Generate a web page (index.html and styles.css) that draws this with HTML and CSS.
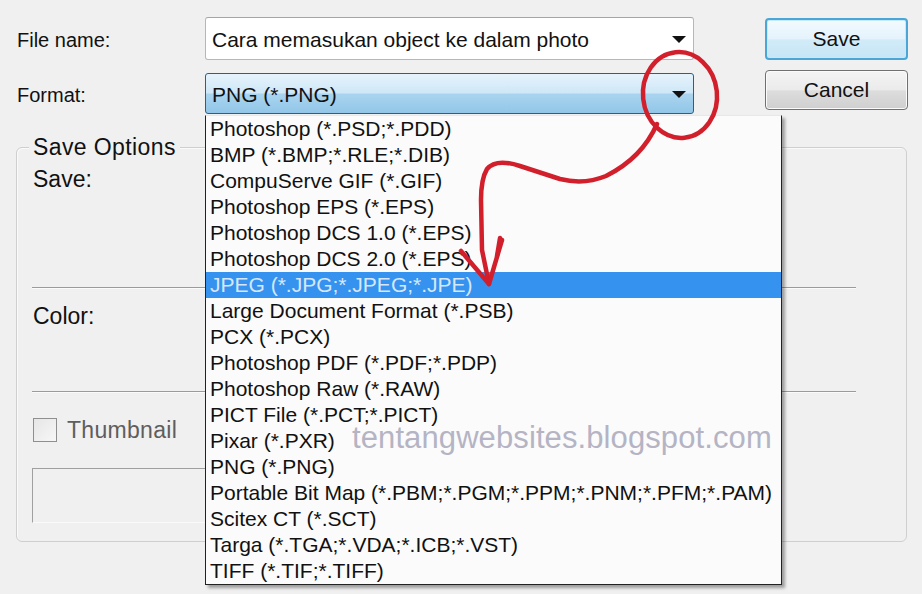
FILE: index.html
```html
<!DOCTYPE html>
<html lang="en">
<head>
    <meta charset="UTF-8">
    <meta name="viewport" content="width=device-width, initial-scale=1.0">
    <title>Save As</title>
    <link rel="stylesheet" href="styles.css">
</head>
<body>
    <div class="dialog">
        <div class="top">
            <div class="fields">
                <div class="field-row">
                    <div class="field-label">File name:</div>
                    <div class="input">
                        <span>Cara memasukan object ke dalam photo</span>
                        <svg class="arrow" width="14" height="8" viewBox="0 0 14 8"><polygon points="0,0 14,0 7,7" /></svg>
                    </div>
                </div>
                <div class="field-row">
                    <div class="field-label">Format:</div>
                    <div class="input combo">
                        <span>PNG (*.PNG)</span>
                        <svg class="arrow" width="14" height="8" viewBox="0 0 14 8"><polygon points="0,0 14,0 7,7" /></svg>
                    </div>
                </div>
            </div>
            <div class="buttons">
                <button type="button" class="btn btn-default">Save</button>
                <button type="button" class="btn">Cancel</button>
            </div>
        </div>

        <!-- Save Options group -->
        <div class="group">
            <div class="group-title">Save Options</div>
            <div class="opt-section opt-save">
                <div class="opt-label">Save:</div>
            </div>
            <div class="opt-section opt-color">
                <div class="opt-label">Color:</div>
            </div>
            <div class="check-row">
                <span class="checkbox"></span>
                <span class="check-label">Thumbnail</span>
            </div>
            <div class="preview-box"></div>
        </div>

        <!-- open Format dropdown -->
        <ul class="format-list">
            <li>Photoshop (*.PSD;*.PDD)</li>
            <li>BMP (*.BMP;*.RLE;*.DIB)</li>
            <li>CompuServe GIF (*.GIF)</li>
            <li>Photoshop EPS (*.EPS)</li>
            <li>Photoshop DCS 1.0 (*.EPS)</li>
            <li>Photoshop DCS 2.0 (*.EPS)</li>
            <li class="selected">JPEG (*.JPG;*.JPEG;*.JPE)</li>
            <li>Large Document Format (*.PSB)</li>
            <li>PCX (*.PCX)</li>
            <li>Photoshop PDF (*.PDF;*.PDP)</li>
            <li>Photoshop Raw (*.RAW)</li>
            <li>PICT File (*.PCT;*.PICT)</li>
            <li>Pixar (*.PXR)</li>
            <li>PNG (*.PNG)</li>
            <li>Portable Bit Map (*.PBM;*.PGM;*.PPM;*.PNM;*.PFM;*.PAM)</li>
            <li>Scitex CT (*.SCT)</li>
            <li>Targa (*.TGA;*.VDA;*.ICB;*.VST)</li>
            <li>TIFF (*.TIF;*.TIFF)</li>
        </ul>

        <div class="watermark">tentangwebsites.blogspot.com</div>

        <!-- red hand-drawn marker -->
        <svg class="annotation" width="922" height="594" viewBox="0 0 922 594">
            <g fill="none" stroke="#d11f2c" stroke-width="4.5" stroke-linecap="round" stroke-linejoin="round">
                <ellipse cx="680" cy="95" rx="37" ry="43" transform="rotate(-6 680 95)" />
                <path d="M657,124 Q642,158 606,176 Q584,185 560,179 L520,166 Q496,158 487,169 Q481,179 481,200 L482,250 L489,284" />
                <path d="M461,251 L489,284 L502,240" />
                <path d="M497,256 L500,238" />
            </g>
        </svg>
    </div>
</body>
</html>
```

FILE: styles.css
```css
body {
    margin: 0;
    background-color: #f0f0f0;
    font-family: "Liberation Sans", Arial, sans-serif;
    color: #111;
}

.dialog {
    position: relative;
    width: 922px;
    height: 594px;
    overflow: hidden;
    padding-top: 17px;
    box-sizing: border-box;
}

.top {
    display: flex;
    padding-left: 17px;
}

.fields {
    display: flex;
    flex-direction: column;
    gap: 13px;
}

.field-row {
    display: flex;
    align-items: center;
}

.field-label {
    width: 188px;
    padding-top: 3px;
    font-size: 20px;
}

.input {
    width: 489px;
    height: 43px;
    box-sizing: border-box;
    display: flex;
    align-items: center;
    justify-content: space-between;
    padding: 2px 7px 0 6px;
    font-size: 21px;
    background-color: #fff;
    border: 1px solid #b5b7bd;
    border-top-color: #a3a5ab;
    border-radius: 3px;
}

.combo {
    height: 41px;
    border: 1px solid #2c5f86;
    background: linear-gradient(to bottom, #e6f3fc 0%, #cfe7f7 48%, #a9d4ef 52%, #92c6e8 100%);
}

.arrow {
    display: block;
    fill: #111;
}

.buttons {
    display: flex;
    flex-direction: column;
    gap: 10px;
    margin-left: 71px;
    margin-top: 1px;
}

.btn {
    width: 143px;
    height: 40px;
    padding: 0;
    font-family: "Liberation Sans", Arial, sans-serif;
    font-size: 21px;
    color: #111;
    border: 1px solid #707070;
    border-radius: 4px;
    background: linear-gradient(to bottom, #f4f4f4 0%, #ebebeb 50%, #dddddd 52%, #cfcfcf 100%);
    box-shadow: inset 0 0 0 1px #fbfbfb;
}

.btn-default {
    height: 42px;
    border: 2px solid #4aa6d6;
    background: linear-gradient(to bottom, #f3fafe 0%, #e4f3fc 50%, #d2ebf8 52%, #c6e5f6 100%);
    box-shadow: inset 0 0 0 1px #c4eafc;
}

/* Save Options group */
.group {
    margin: 33px 0 0 16px;
    width: 891px;
    box-sizing: border-box;
    padding: 0 50px 18px 15px;
    border: 1px solid #cfcfcf;
    border-radius: 6px;
    box-shadow: inset 1px 1px 0 #fafafa;
}

.group-title {
    width: fit-content;
    margin: -14px 0 0 -3px;
    padding: 0 4px;
    background-color: #f0f0f0;
    font-size: 23px;
    line-height: 26px;
    letter-spacing: 0.4px;
}

.opt-section {
    box-sizing: border-box;
    border-bottom: 1px solid #9b9b9b;
    box-shadow: 0 1px 0 #fbfbfb;
}

.opt-save {
    height: 128px;
    padding-top: 6px;
}

.opt-color {
    height: 104px;
    padding-top: 15px;
}

.opt-label {
    padding-left: 1px;
    font-size: 23px;
    line-height: 26px;
}

.check-row {
    display: flex;
    align-items: center;
    gap: 10px;
    margin-top: 26px;
    height: 24px;
}

.checkbox {
    width: 24px;
    height: 24px;
    box-sizing: border-box;
    margin-left: 1px;
    border: 1px solid #8e8f8f;
    background: linear-gradient(to bottom right, #e6e6e6, #f7f7f7);
}

.check-label {
    font-size: 23px;
    color: #5e5e5e;
    letter-spacing: 0.3px;
}

.preview-box {
    margin-top: 26px;
    width: 680px;
    height: 55px;
    box-sizing: border-box;
    border: 1px solid #fafafa;
    border-top-color: #a0a0a0;
    border-left-color: #a0a0a0;
}

/* open dropdown */
.format-list {
    position: absolute;
    left: 205px;
    top: 115px;
    width: 577px;
    height: 470px;
    box-sizing: border-box;
    margin: 0;
    padding: 0;
    list-style: none;
    background-color: #fbfbfb;
    border: 1px solid #222;
    border-top-color: #e8e8e8;
    box-shadow: 3px 3px 3px rgba(0, 0, 0, 0.35);
}

.format-list li {
    height: 26px;
    line-height: 26px;
    padding-left: 4px;
    font-size: 21px;
    white-space: nowrap;
}

.format-list li.selected {
    background-color: #3592ef;
    color: #d6e7fb;
}

.watermark {
    position: absolute;
    left: 352px;
    top: 420px;
    font-size: 31px;
    line-height: 36px;
    letter-spacing: 0.1px;
    color: #b4b4c4;
    white-space: nowrap;
}

.annotation {
    position: absolute;
    left: 0;
    top: 0;
    pointer-events: none;
}
```
